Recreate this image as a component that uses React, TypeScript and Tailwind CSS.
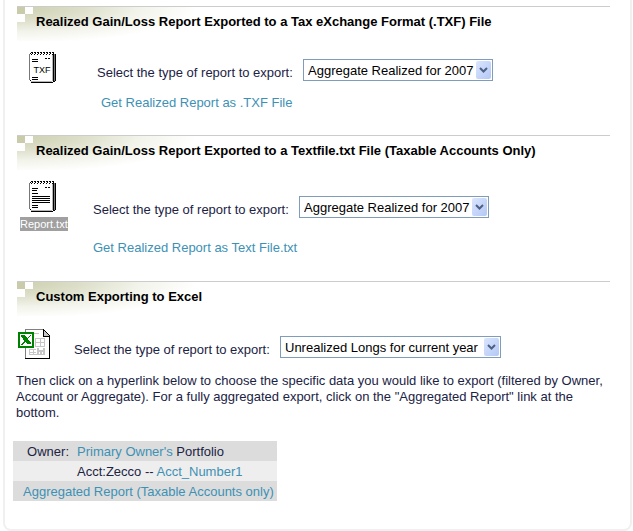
import React, { useState } from 'react';

const linkClass = 'text-[#3d91b5] hover:underline';

const SectionTitle: React.FC<{ children: React.ReactNode }> = ({ children }) => (
  <div className="relative ml-3 mr-5 h-[35px] border-t border-[#cccccc]">
    <div
      aria-hidden="true"
      className="absolute left-0 top-0 h-[34px] w-[180px] bg-[radial-gradient(180px_36px_at_top_left,#cccfae_0%,#dcdec8_35%,#f2f3ea_68%,#ffffff_100%)]"
    >
      <div className="grid w-4 grid-cols-2">
        <span className="h-[7px] bg-[#c9cbab]" />
        <span className="h-[7px] bg-white" />
        <span className="h-2 bg-white" />
      </div>
    </div>
    <h2 className="relative pl-[19px] pt-[7px] text-[13px] font-bold leading-4 text-black">{children}</h2>
  </div>
);

interface ReportSelectProps {
  id: string;
  options: string[];
  className: string;
}

const ReportSelect: React.FC<ReportSelectProps> = ({ id, options, className }) => {
  const [value, setValue] = useState(options[0]);

  return (
    <div className={`relative ${className}`}>
      <select
        id={id}
        value={value}
        onChange={(e) => setValue(e.target.value)}
        className="block h-[22px] w-full appearance-none border border-[#7f9db9] bg-white pl-1 pr-4 pt-px text-[13px] leading-4 text-black outline-none"
      >
        {options.map((o) => (
          <option key={o}>{o}</option>
        ))}
      </select>
      <span className="pointer-events-none absolute bottom-[2px] right-[2px] top-[2px] flex w-[15px] items-center justify-center rounded-xs bg-linear-to-br from-[#dbe5fd] to-[#b3c8f6]">
        <svg width="9" height="6" viewBox="0 0 9 6" fill="none" stroke="#4d6185" strokeWidth="2">
          <path d="M1 1l3.5 3.5L8 1" />
        </svg>
      </span>
    </div>
  );
};

const Notepad: React.FC<{ label: string; children: React.ReactNode }> = ({ label, children }) => (
  <svg role="img" aria-label={label} width="28" height="33" viewBox="0 0 28 33" shapeRendering="crispEdges">
    <path d="M1 2h23v29H1z" fill="#fff" />
    <path d="M0 3h1v26H0z" fill="#777" />
    <path d="M23 4h1v26h-1zM2 30h21v1H2z" fill="#b5b5b5" />
    <path d="M24 2h1v28h-1zM26 3h1v27h-1zM1 29h1v1H1zM2 31h22v1H2zM24 30h2v1h-2zM1 2h1v1H1z" fill="#000" />
    <path d="M25 3h1v27h-1z" fill="#777" />
    <path d="M2 1.5h23" stroke="#000" strokeDasharray="2 1" />
    <path d="M3 2.5h21" stroke="#000" strokeDasharray="1 2" />
    <path d="M2 3.5h22" stroke="#000" strokeDasharray="1 2" />
    {children}
  </svg>
);

const TxfIcon = () => (
  <Notepad label="TXF file">
    <path d="M3 8h6v1H3zM16 7h2v1h-2zM19 7h2v1h-2zM3 10h6v1H3zM3 26h6v1H3zM3 28h6v1H3z" fill="#000" />
    <text x="13" y="22" textAnchor="middle" fontFamily="Liberation Sans, sans-serif" fontSize="9" fill="#000">
      TXF
    </text>
  </Notepad>
);

const TextIcon = () => (
  <Notepad label="Text file">
    <path
      d="M3 8h6v1H3zM16 7h2v1h-2zM19 7h2v1h-2zM3 10h5v1H3zM3 13h6v1H3zM3 16h18v1H3zM3 18h18v1H3zM3 20h18v1H3zM3 22h18v1H3zM3 25h6v1H3zM3 27h6v1H3z"
      fill="#000"
    />
  </Notepad>
);

const ExcelIcon = () => (
  <svg role="img" aria-label="Excel file" width="33" height="30" viewBox="0 0 33 30" shapeRendering="crispEdges">
    <path d="M7 0h18l7 7v22H7z" fill="#fff" />
    <path d="M7 0h18v1H8v28H7z" fill="#808080" />
    <path d="M7 29h25v1H7zM31 7h1v23h-1zM25 0h1v7h6v1h-7z" fill="#000" />
    <path d="M26 1h1v1h-1zM27 2h1v1h-1zM28 3h1v1h-1zM29 4h1v1h-1zM30 5h1v1h-1zM31 6h1v1h-1z" fill="#000" />
    <path d="M26 2h1v1h1v1h1v1h1v1h1v1h-5z" fill="#c6c6c6" />
    <path
      d="M12 4h9v1h-9zM17 9h10v1H17zM17 13h10v1H17zM17 17h10v1H17zM17 9h1v9h-1zM22 9h1v9h-1zM26 9h1v9h-1zM11 20h7v1h-7zM11 23h7v1h-7zM11 25h16v1H11zM11 20h1v6h-1zM15 20h1v6h-1zM19 19h2v6h-2zM22 21h2v4h-2zM25 19h2v6h-2zM21 21h4v2h-4z"
      fill="#c6c6c6"
    />
    <path d="M0 3h16v16H0z" fill="#008000" />
    <path d="M2 5h12v12H2z" fill="#fff" />
    <path
      d="M3 6h4v1h1v1h1v1h1V8h1V7h1V6h1v1h-1v1h-1v1h-1v2h1v1h1v1h1v2h-4v-1H8v-1H7v1H6v1H5v1H3v-1h1v-1h1v-1h1v-2H5V9H4V8H3z"
      fill="#008000"
    />
  </svg>
);

const realizedOptions = ['Aggregate Realized for 2007', 'Aggregate Realized for 2006'];
const excelOptions = ['Unrealized Longs for current year', 'Aggregate Realized for 2007'];

const App: React.FC = () => {
  return (
    <main className="ml-[3px] mr-px rounded-b-lg border-x-2 border-b-2 border-[#f0f0f0] bg-white pb-7 pt-[6px] font-['Liberation_Sans',Arial,sans-serif] text-[13px] leading-4 text-[#1b2344]">
      <section className="h-[129px]">
        <SectionTitle>Realized Gain/Loss Report Exported to a Tax eXchange Format (.TXF) File</SectionTitle>
        <div className="flex pl-6 pt-[10px]">
          <div className="w-[68px] shrink-0">
            <TxfIcon />
          </div>
          <div className="pt-2">
            <div className="flex items-center">
              <label htmlFor="txf-report" className="w-[206px] whitespace-nowrap pt-[6px]">
                Select the type of report to export:
              </label>
              <ReportSelect id="txf-report" options={realizedOptions} className="w-[190px]" />
            </div>
            <a href="#txf" className={`ml-1 mt-[14px] inline-block ${linkClass}`}>
              Get Realized Report as .TXF File
            </a>
          </div>
        </div>
      </section>

      <section className="h-[146px]">
        <SectionTitle>Realized Gain/Loss Report Exported to a Textfile.txt File (Taxable Accounts Only)</SectionTitle>
        <div className="flex pl-[15px] pt-[10px]">
          <div className="flex w-[73px] shrink-0 flex-col items-start">
            <div className="pl-[9px]">
              <TextIcon />
            </div>
            <span className="mt-1 bg-[#a0a0a0] text-[11px] leading-[14px] text-white">Report.txt</span>
          </div>
          <div className="pt-4">
            <div className="flex items-center">
              <label htmlFor="text-report" className="w-[206px] whitespace-nowrap pt-[6px]">
                Select the type of report to export:
              </label>
              <ReportSelect id="text-report" options={realizedOptions} className="w-[190px]" />
            </div>
            <a href="#text" className={`mt-[22px] inline-block ${linkClass}`}>
              Get Realized Report as Text File.txt
            </a>
          </div>
        </div>
      </section>

      <section>
        <SectionTitle>Custom Exporting to Excel</SectionTitle>
        <div className="flex pl-[13px] pt-[13px]">
          <div className="w-14 shrink-0">
            <ExcelIcon />
          </div>
          <div className="flex items-center pt-[6px]">
            <label htmlFor="excel-report" className="w-[206px] whitespace-nowrap pt-[6px]">
              Select the type of report to export:
            </label>
            <ReportSelect id="excel-report" options={excelOptions} className="w-[221px]" />
          </div>
        </div>

        <p className="ml-[11px] mr-4 mt-[14px]">
          Then click on a hyperlink below to choose the specific data you would like to export (filtered by Owner,
          Account or Aggregate). For a fully aggregated export, click on the "Aggregated Report" link at the bottom.
        </p>

        <table className="ml-2 mt-5 w-[264px] border-collapse">
          <tbody>
            <tr className="h-5 bg-[#dcdcdc]">
              <th scope="row" className="w-16 pb-0 pr-2 pt-px text-right font-normal">
                Owner:
              </th>
              <td className="whitespace-nowrap pt-px">
                <a href="#owner" className={linkClass}>
                  Primary Owner's
                </a>{' '}
                Portfolio
              </td>
            </tr>
            <tr className="h-5 bg-[#eeeeee]">
              <td className="p-0" />
              <td className="whitespace-nowrap pt-px">
                Acct:Zecco --{' '}
                <a href="#account" className={linkClass}>
                  Acct_Number1
                </a>
              </td>
            </tr>
            <tr className="h-5 bg-[#dcdcdc]">
              <td colSpan={2} className="whitespace-nowrap pl-[10px] pt-px">
                <a href="#aggregated" className={linkClass}>
                  Aggregated Report (Taxable Accounts only)
                </a>
              </td>
            </tr>
          </tbody>
        </table>
      </section>
    </main>
  );
};

export default App;
